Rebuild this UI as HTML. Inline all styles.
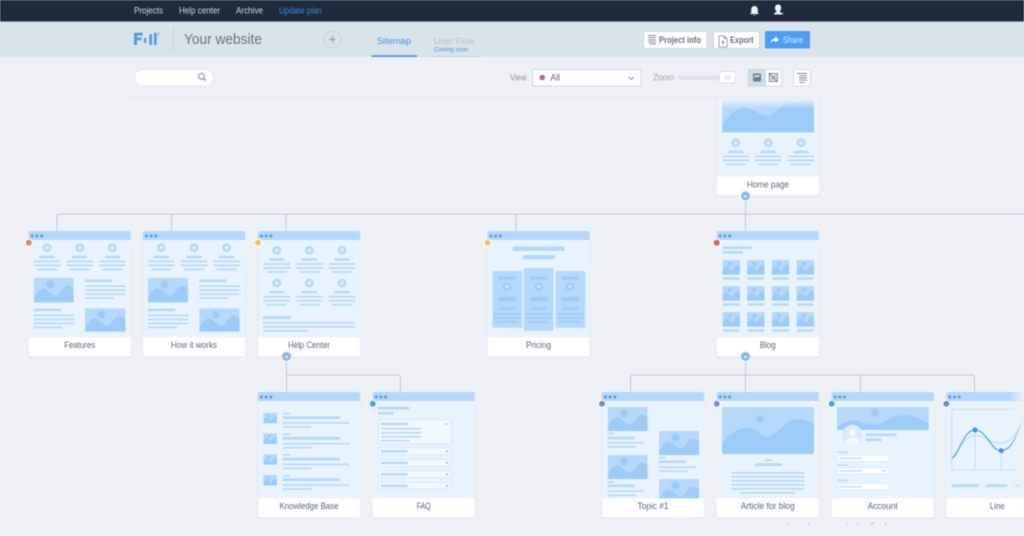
<!DOCTYPE html>
<html><head><meta charset="utf-8"><title>Sitemap</title>
<style>
html,body{margin:0;padding:0;width:1024px;height:536px;overflow:hidden;background:#edf1f5}
svg{display:block;filter:blur(.5px);font-family:"Liberation Sans",sans-serif}
</style></head><body>
<svg width="1024" height="536" viewBox="0 0 1024 536" xmlns="http://www.w3.org/2000/svg">
<defs>
<symbol id="img" viewBox="0 0 120 74" preserveAspectRatio="none">
<rect width="120" height="74" rx="2" fill="#b5d8fb"/><circle cx="49" cy="20" r="12" fill="#9ccbf9"/>
<path d="M0 64C8 45 20 32 28 32C42 32 50 54 66 54C82 54 85 24 102 24C110 24 116 28 120 36V72Q120 74 118 74H2Q0 74 0 72Z" fill="#9ccbf9"/>
</symbol>
<g id="card">
<rect x="-.5" y=".5" width="103" height="126" rx="2" fill="#dde4eb"/>
<rect width="102" height="125.5" rx="2" fill="#fff"/>
<path d="M0 8H102V106.3H0Z" fill="#e8f3fd"/>
<path d="M0 9V2Q0 0 2 0H100Q102 0 102 2V9Z" fill="#b5d7fb"/>
<circle cx="3.5" cy="5" r="1.5" fill="#4d9df3"/><circle cx="8.2" cy="5" r="1.5" fill="#4d9df3"/><circle cx="12.9" cy="5" r="1.5" fill="#4d9df3"/>
</g>
<g id="col" fill="#b5d7f9">
<circle r="4.4"/><circle r="2" fill="#dcebfb"/>
<rect x="-7.7" y="8" width="15.4" height="2.4"/>
<rect x="-13.2" y="12.9" width="26.4" height="1.6"/><rect x="-13.2" y="16.9" width="26.4" height="1.6"/><rect x="-10" y="20.9" width="20" height="1.6"/>
</g>
<g id="txtblock" fill="#b5d7f9">
<rect width="27.4" height="2.4"/><rect y="5.9" width="40.4" height="1.6"/><rect y="9.9" width="40.4" height="1.6"/><rect y="13.9" width="40.4" height="1.6"/><rect y="17.9" width="29" height="1.6"/>
</g>
<g id="feat">
<use href="#card"/>
<use href="#col" x="18.3" y="16.7"/><use href="#col" x="51" y="16.7"/><use href="#col" x="83.7" y="16.7"/>
<use href="#img" x="5" y="46.7" width="40" height="24.7"/>
<use href="#txtblock" x="56.3" y="48.5"/>
<use href="#txtblock" x="5" y="77.7"/>
<use href="#img" x="56.3" y="77.3" width="40.4" height="23.4"/>
</g>
<g id="pcol" fill="#9ccbf9">
<rect x="6" y="5.7" width="17.4" height="3"/>
<circle cx="14.5" cy="15.7" r="4.2"/><circle cx="14.5" cy="15.7" r="1.9" fill="#cfe4fb"/>
<rect x="6" y="26" width="17.4" height="4.3"/>
<rect x="7" y="36.3" width="15.4" height="2.4"/>
<rect x="1.3" y="42" width="26.7" height="1.6"/><rect x="1.3" y="46" width="26.7" height="1.6"/><rect x="4" y="50" width="20.7" height="1.6"/>
</g>
<g id="thumb">
<use href="#img" width="17.6" height="14.7"/>
<rect x=".6" y="17.3" width="16.4" height="2.4" fill="#b5d7f9"/>
</g>
<g id="kb" fill="#b5d7f9">
<use href="#img" x="5.3" width="13.7" height="10.6"/>
<rect x="24.7" y=".2" width="8" height="1.4"/><rect x="24.7" y="3.6" width="57" height="2.7"/>
<rect x="24.7" y="9.5" width="66.6" height="1.6"/><rect x="24.7" y="13.5" width="28.6" height="1.6"/>
</g>
<g id="faqrow">
<rect x="5.7" y=".5" width="73" height="7" rx="1" fill="#f2f8fe" stroke="#d3e5f6" stroke-width=".9"/>
<rect x="8.3" y="2.8" width="26.7" height="2.5" fill="#b5d7f9"/><circle cx="74.3" cy="4" r="1.1" fill="#8fbfec"/>
</g>
<clipPath id="hc"><rect x="700" y="98" width="140" height="110"/></clipPath>
<clipPath id="tc"><rect x="0" y="9" width="102" height="97.3"/></clipPath>
<linearGradient id="fade" x1="0" y1="0" x2="0" y2="1"><stop offset="0" stop-color="#eef3f8"/><stop offset="1" stop-color="#eef3f8" stop-opacity="0"/></linearGradient>
<linearGradient id="rf" x1="0" y1="0" x2="1" y2="0"><stop offset="0" stop-color="#edf1f5" stop-opacity="0"/><stop offset="1" stop-color="#edf1f5"/></linearGradient>
</defs>

<!-- top bar -->
<rect width="1024" height="536" fill="#edf1f5"/>
<rect width="1024" height="21.5" fill="#1e2b3c"/>
<g font-size="9" fill="#d3d9df">
<text x="134" y="13.7" textLength="29" lengthAdjust="spacingAndGlyphs">Projects</text><text x="179" y="13.7" textLength="41" lengthAdjust="spacingAndGlyphs">Help center</text><text x="236" y="13.7" textLength="27" lengthAdjust="spacingAndGlyphs">Archive</text>
<text x="279" y="13.7" textLength="43" lengthAdjust="spacingAndGlyphs" fill="#3f84d6">Update plan</text>
</g>
<path d="M754.5 6C752.3 6 751.2 7.6 751.2 9.8V12.4L750 14H759L757.8 12.4V9.8C757.8 7.6 756.7 6 754.5 6ZM753.2 14.8H755.8Q754.5 16.4 753.2 14.8Z" fill="#eef1f4"/>
<path d="M778 4.5C775.8 4.5 775 6 775 8C775 9.6 775.7 10.6 776.5 11.2V12C775 12.4 774 13 774 14.5H782.5C782.5 13 781.2 12.4 779.8 12V11.2C780.5 10.8 781 10 781 9V7C781 5.5 780 4.5 778 4.5Z" fill="#eef1f4"/><rect x="782" y="13" width="2" height="1" fill="#7c8794"/>

<!-- header -->
<rect y="21.5" width="1024" height="35.5" fill="#d9e3ea"/>
<rect y="21.5" width="1024" height="1" fill="#cfd9e1"/>
<g fill="#4c9df0">
<path d="M134 32.8H142.7V35.6H137V37.6H141.6V40.2H137V45H134Z"/>
<rect x="144" y="38" width="2.2" height="5"/>
<rect x="149.3" y="34.3" width="2.7" height="10.7"/><rect x="154" y="32.8" width="2.7" height="12.2"/>
</g>
<text x="157.5" y="35.5" font-size="5" fill="#9aa8b4">β</text>
<rect x="173" y="28" width="1" height="23" fill="#c6d1da"/>
<text x="184" y="44" font-size="15" fill="#68747f" textLength="78" lengthAdjust="spacingAndGlyphs">Your website</text>
<circle cx="332.5" cy="39.5" r="8.5" fill="none" stroke="#b3bec8" stroke-width=".8" stroke-dasharray="1.6 1.4"/>
<path d="M329 39.5H336M332.5 36V43" stroke="#87939e" stroke-width=".9"/>
<text x="377" y="44" font-size="9.6" fill="#4a90e2" textLength="34" lengthAdjust="spacingAndGlyphs">Sitemap</text>
<rect x="371.5" y="55.3" width="45.5" height="1.7" fill="#4a90e2"/>
<text x="434" y="44" font-size="9.6" fill="#b6c1cb" textLength="40.5" lengthAdjust="spacingAndGlyphs">User Flow</text>
<text x="434" y="51.3" font-size="6" fill="#4f95e4" textLength="34" lengthAdjust="spacingAndGlyphs">Coming soon</text>
<rect x="428.5" y="56" width="51.5" height="1" fill="#c9d3db"/>

<g fill="#fff" stroke="#c2d0dc" stroke-width=".8">
<rect x="643.5" y="31.5" width="63.5" height="17" rx="1.5"/><rect x="713.5" y="31.5" width="46" height="17" rx="1.5"/>
</g>
<rect x="765" y="31" width="45" height="17.5" rx="1.5" fill="#4c9df5"/>
<path d="M648 36H656M648 38.2H656M648 40.4H656M648 42.6H656M649.5 44.4H656" stroke="#7b858f" stroke-width=".9" transform="translate(0,-.5)"/>
<text x="659" y="42.8" font-size="9" font-weight="bold" fill="#66707a" textLength="42" lengthAdjust="spacingAndGlyphs">Project info</text>
<path d="M719 36H724L727 38.5V47H719Z M724 36V38.5H727M723 45V41M721.5 42.5L723 41L724.5 42.5" fill="none" stroke="#7b858f" stroke-width=".8"/>
<text x="730" y="42.8" font-size="9" font-weight="bold" fill="#66707a" textLength="23.5" lengthAdjust="spacingAndGlyphs">Export</text>
<path d="M770 43C770.5 40.5 772.5 39 775 38.8V36.5L779 39.7L775 42.5V40.6C773 40.6 771.5 41.5 770 43Z" fill="#fff"/>
<text x="783" y="42.8" font-size="9" fill="#dcedff" textLength="20" lengthAdjust="spacingAndGlyphs">Share</text>

<!-- toolbar -->
<rect x="134.5" y="69.5" width="79" height="16.5" rx="8.2" fill="#fff" stroke="#dde5ec" stroke-width=".9"/>
<circle cx="201.5" cy="76.3" r="2.9" fill="none" stroke="#7f8993" stroke-width="1"/><path d="M203.7 78.5L205.8 80.6" stroke="#7f8993" stroke-width="1.2"/>
<rect x="126" y="97" width="676" height=".9" fill="#e2e8ee"/>
<text x="510" y="80.5" font-size="9" fill="#8d97a1" textLength="16.5" lengthAdjust="spacingAndGlyphs">View</text>
<rect x="532.5" y="69.5" width="108.5" height="16.5" rx="1.5" fill="#fff" stroke="#c6d7e6" stroke-width=".9"/>
<circle cx="542.3" cy="77.5" r="2.8" fill="#c2667c"/>
<text x="550.5" y="80.5" font-size="8.8" fill="#5a646e" textLength="9.5" lengthAdjust="spacingAndGlyphs">All</text>
<path d="M628.5 77L631.3 79.4L634 77" fill="none" stroke="#7a848e" stroke-width=".9"/>
<text x="653" y="80.5" font-size="9" fill="#99a3ad" textLength="21" lengthAdjust="spacingAndGlyphs">Zoom</text>
<rect x="679" y="75.5" width="42" height="4.5" fill="#dbe4ec"/>
<rect x="719.5" y="71.5" width="16" height="11.5" rx="1.5" fill="#fff" stroke="#d5dfe8" stroke-width=".9"/>
<path d="M725.5 75V80M727.5 75V80M729.5 75V80" stroke="#c4ced7" stroke-width=".7"/>
<rect x="748.5" y="69.5" width="17" height="16.5" fill="#cfdeeb" stroke="#bed0df" stroke-width=".8"/>
<rect x="765.5" y="69.5" width="16" height="16.5" fill="#fff" stroke="#c6d7e6" stroke-width=".8"/>
<rect x="753" y="73.5" width="8" height="8" rx=".8" fill="#6d7985"/><path d="M754.3 78.5L756.5 76.5L758 77.7L760 75.5V75H754.3Z" fill="#cfdeeb"/>
<rect x="769.3" y="73.5" width="8" height="8" fill="#dfe5ea" stroke="#75808b" stroke-width=".9"/><path d="M769.3 73.5L777.3 81.5M772 79.5L775.5 75.5" stroke="#75808b" stroke-width=".9"/>
<rect x="793.5" y="69.5" width="17" height="16.5" rx="1" fill="#fff" stroke="#c6d7e6" stroke-width=".8"/>
<path d="M797 73.5H807M799 75.8H807M799 78H807M799 80.2H807M799 82.4H805" stroke="#7b858f" stroke-width=".9"/>

<!-- connectors -->
<g fill="none" stroke="#b7cce0" stroke-width="1">
<path d="M57 214H1024M57 214V231M171.5 214V231M286 214V231M516 214V231M745.5 196V231"/>
<path d="M286.5 357V392M286.5 375H398Q400.5 375 400.5 377.5V392"/>
<path d="M630.5 392V377.5Q630.5 375 633 375H972Q974.5 375 974.5 377.5V392M745.5 357V392M860.5 375V392"/>
</g>

<!-- Home page -->
<g clip-path="url(#hc)">
<g transform="translate(717,70)">
<use href="#card"/>
<rect x="5.3" y="15" width="91.7" height="47.3" fill="#b5d8fb"/>
<path d="M5.3 55C12 45 20 37.7 27 37.7C36 37.7 42 45.7 51 45.7C58 45.7 62 34 72 33L97 32V62.3H5.3Z" fill="#9ccbf9"/>
<use href="#col" x="18.7" y="72.7"/><use href="#col" x="51.3" y="72.7"/><use href="#col" x="84" y="72.7"/>
</g></g>
<rect x="717" y="98" width="102" height="11" fill="url(#fade)"/>
<g font-size="9" fill="#5b6570" text-anchor="middle">
<text x="768" y="187.5" textLength="42" lengthAdjust="spacingAndGlyphs">Home page</text>
</g>

<!-- Row 2 -->
<g transform="translate(28.7,231)"><use href="#feat"/><text x="51" y="117" font-size="9" fill="#5b6570" text-anchor="middle" textLength="31" lengthAdjust="spacingAndGlyphs">Features</text><circle cy="11.8" r="3.5" fill="#f5813f" stroke="#fff" stroke-width="1"/></g>
<g transform="translate(143,231)"><use href="#feat"/><text x="51" y="117" font-size="9" fill="#5b6570" text-anchor="middle" textLength="46" lengthAdjust="spacingAndGlyphs">How it works</text></g>

<g transform="translate(258,231)"><use href="#card"/>
<use href="#col" x="18.7" y="19.3"/><use href="#col" x="51.3" y="19.3"/><use href="#col" x="84" y="19.3"/>
<use href="#col" x="18.7" y="52"/><use href="#col" x="51.3" y="52"/><use href="#col" x="84" y="52"/>
<g fill="#b5d7f9"><rect x="5" y="85" width="28" height="2.8"/><rect x="5" y="91" width="92" height="1.6"/><rect x="5" y="95" width="92" height="1.6"/><rect x="5" y="99" width="45.5" height="1.6"/></g>
<text x="51" y="117" font-size="9" fill="#5b6570" text-anchor="middle" textLength="42" lengthAdjust="spacingAndGlyphs">Help Center</text><circle cy="11.8" r="3.5" fill="#f8c24e" stroke="#fff" stroke-width="1"/></g>

<g transform="translate(487.5,231)"><use href="#card"/>
<g fill="#b5d7f9"><rect x="25.3" y="15.3" width="51.7" height="4.7"/><rect x="35.7" y="24" width="31.6" height="4.3"/></g>
<rect x="5" y="40" width="29.7" height="56.7" rx="1.5" fill="#b5d8fb"/><rect x="36.3" y="37" width="29.7" height="62.7" rx="1.5" fill="#b5d8fb"/><rect x="68" y="40" width="29.7" height="56.7" rx="1.5" fill="#b5d8fb"/>
<use href="#pcol" x="5" y="40"/><use href="#pcol" x="36.6" y="40"/><use href="#pcol" x="68" y="40"/>
<text x="51" y="117" font-size="9" fill="#5b6570" text-anchor="middle" textLength="25" lengthAdjust="spacingAndGlyphs">Pricing</text><circle cy="11.8" r="3.5" fill="#f8c24e" stroke="#fff" stroke-width="1"/></g>

<g transform="translate(716.7,231)"><use href="#card"/>
<g fill="#b5d7f9"><rect x="6" y="15.3" width="28.7" height="2.7"/><rect x="6" y="20" width="20.3" height="2.7"/></g>
<use href="#thumb" x="5.7" y="29"/><use href="#thumb" x="30.3" y="29"/><use href="#thumb" x="55" y="29"/><use href="#thumb" x="79.7" y="29"/>
<use href="#thumb" x="5.7" y="55"/><use href="#thumb" x="30.3" y="55"/><use href="#thumb" x="55" y="55"/><use href="#thumb" x="79.7" y="55"/>
<use href="#thumb" x="5.7" y="81"/><use href="#thumb" x="30.3" y="81"/><use href="#thumb" x="55" y="81"/><use href="#thumb" x="79.7" y="81"/>
<text x="51" y="117" font-size="9" fill="#5b6570" text-anchor="middle" textLength="16" lengthAdjust="spacingAndGlyphs">Blog</text><circle cy="11.8" r="3.5" fill="#f2574f" stroke="#fff" stroke-width="1"/></g>

<!-- Row 3 -->
<g transform="translate(258,392)"><use href="#card"/>
<use href="#kb" y="20.7"/><use href="#kb" y="41.4"/><use href="#kb" y="62.1"/><use href="#kb" y="82.8"/>
<text x="51" y="117" font-size="9" fill="#5b6570" text-anchor="middle" textLength="59" lengthAdjust="spacingAndGlyphs">Knowledge Base</text></g>

<g transform="translate(372.7,392)"><use href="#card"/>
<g fill="#b5d7f9"><rect x="5.3" y="14.8" width="31" height="2.7"/><rect x="5.3" y="20" width="15.4" height="2.5"/></g>
<rect x="5.7" y="27.7" width="73" height="24.3" rx="1" fill="#f2f8fe" stroke="#d3e5f6" stroke-width=".9"/>
<g fill="#b5d7f9"><rect x="8.3" y="30.7" width="26.7" height="2.5"/><rect x="8.3" y="36" width="40" height="1.6"/><rect x="8.3" y="40" width="40" height="1.6"/><rect x="8.3" y="44" width="40" height="1.6"/><rect x="8.3" y="48" width="29" height="1.6"/><rect x="72.5" y="31.5" width="3" height=".9" fill="#8fbfec"/></g>
<use href="#faqrow" y="55.3"/><use href="#faqrow" y="66.9"/><use href="#faqrow" y="78.3"/><use href="#faqrow" y="89.8"/>
<text x="51" y="117" font-size="9" fill="#5b6570" text-anchor="middle" textLength="14" lengthAdjust="spacingAndGlyphs">FAQ</text><circle cy="11.8" r="3.5" fill="#4a9cf5" stroke="#fff" stroke-width="1"/></g>

<g transform="translate(602,392)"><use href="#card"/>
<g clip-path="url(#tc)">
<use href="#img" x="5.7" y="15" width="40" height="24"/><use href="#img" x="5.7" y="63" width="40" height="24"/>
<use href="#img" x="57" y="39" width="40" height="24"/><use href="#img" x="57" y="87" width="40" height="24"/>
<g fill="#b5d7f9">
<rect x="5.7" y="40.6" width="6.7" height="1.5"/><rect x="5.7" y="44.8" width="26.7" height="2.6"/><rect x="5.7" y="50" width="36.3" height="1.6"/><rect x="5.7" y="54" width="28.3" height="1.6"/>
<rect x="5.7" y="89.3" width="6.7" height="1.5"/><rect x="5.7" y="92.6" width="26.7" height="2.6"/><rect x="5.7" y="98.4" width="36.3" height="1.6"/><rect x="5.7" y="102.4" width="28.3" height="1.6"/>
<rect x="57" y="65" width="7" height="1.5"/><rect x="57" y="68.4" width="27" height="2.6"/><rect x="57" y="74.4" width="36.7" height="1.6"/><rect x="57" y="78.4" width="28.7" height="1.6"/>
</g></g>
<text x="51" y="117" font-size="9" fill="#5b6570" text-anchor="middle" textLength="31" lengthAdjust="spacingAndGlyphs">Topic #1</text><circle cy="11.8" r="3.5" fill="#7f86dc" stroke="#fff" stroke-width="1"/></g>

<g transform="translate(716.7,392)"><use href="#card"/>
<rect x="5.3" y="15" width="92" height="47" rx="1.5" fill="#b5d8fb"/><circle cx="43.3" cy="27" r="4" fill="#9ccbf9"/>
<path d="M5.3 53C12 40 22 36.5 30 36C40 35.5 45 45 50 45C60 45 68 27 82 27C90 27 94 30 97.3 33V60.5Q97.3 62 96 62H7Q5.3 62 5.3 60.5Z" fill="#9ccbf9"/>
<g fill="#b5d7f9"><rect x="48.3" y="67.6" width="7.4" height="1.5"/><rect x="38.3" y="71.3" width="27" height="2.7"/>
<rect x="14.7" y="80" width="73" height="1.6"/><rect x="14.7" y="84" width="73" height="1.6"/><rect x="14.7" y="88" width="73" height="1.6"/><rect x="14.7" y="92" width="73" height="1.6"/><rect x="14.7" y="96" width="73" height="1.6"/><rect x="22.7" y="100" width="55.3" height="1.6"/></g>
<text x="51" y="117" font-size="9" fill="#5b6570" text-anchor="middle" textLength="54" lengthAdjust="spacingAndGlyphs">Article for blog</text><circle cy="11.8" r="3.5" fill="#7f86dc" stroke="#fff" stroke-width="1"/></g>

<g transform="translate(831.7,392)"><use href="#card"/>
<rect x="5.3" y="15" width="91.7" height="23" rx="1.5" fill="#b5d8fb"/><circle cx="43" cy="20.7" r="4" fill="#9ccbf9"/>
<path d="M5.3 35C15 28 22 27 30 30C38 33 45 34 52 30C62 24 72 22 80 24C88 26 93 30 97 31V36.5Q97 38 95.5 38H7Q5.3 38 5.3 36.5Z" fill="#9ccbf9"/>
<circle cx="20.7" cy="43.3" r="10.5" fill="#dbeafa"/><circle cx="20.7" cy="40.5" r="3.6" fill="#f3f8fe"/><path d="M13.5 50.5C14.5 46.5 17.5 45.5 20.7 45.5C24 45.5 27 46.5 28 50.5C24 54.5 17.5 54.5 13.5 50.5Z" fill="#f3f8fe"/>
<g fill="#b5d7f9"><rect x="34" y="41.5" width="31" height="2.6"/><rect x="34" y="46.5" width="15.7" height="2.6"/>
<rect x="5.3" y="59.6" width="11.7" height="1.3"/><rect x="5.3" y="72.6" width="11.7" height="1.3"/><rect x="5.3" y="87.8" width="11.7" height="1.3"/></g>
<g fill="#fff" stroke="#d3e5f6" stroke-width=".7"><rect x="5.3" y="63.3" width="52" height="6.2" rx=".8"/><rect x="5.3" y="76" width="52" height="6" rx=".8"/><rect x="5.3" y="91.7" width="52" height="6" rx=".8"/></g>
<g fill="#b5d7f9"><rect x="7.3" y="65.7" width="23.4" height="1.3"/><rect x="7.3" y="78.3" width="23.4" height="1.3"/><rect x="7.3" y="94.1" width="23.4" height="1.3"/></g>
<path d="M50.5 78.2H53.5L52 80Z" fill="#8fbfec"/>
<text x="51" y="117" font-size="9" fill="#5b6570" text-anchor="middle" textLength="30" lengthAdjust="spacingAndGlyphs">Account</text><circle cy="11.8" r="3.5" fill="#4a9cf5" stroke="#fff" stroke-width="1"/></g>

<g transform="translate(946.3,392)"><use href="#card"/>
<path d="M78 17.5H5.5V78H78" fill="none" stroke="#cbdff3" stroke-width="1"/>
<path d="M28.7 38V78M55 58.7V78" stroke="#c5dbf0" stroke-width="1"/>
<path d="M5.7 66.3C13 60 17 43.7 28.7 43.7C40 43.7 43 51.3 55 51.3C66 51.3 71 38 78 27" fill="none" stroke="#c3dcf6" stroke-width="1.3"/>
<path d="M5.7 66.3C13 62 17 38 28.7 38C41 38 44 58.7 55 58.7C67 58.7 71 38 78 26.3" fill="none" stroke="#5c9fe6" stroke-width="1.2"/>
<circle cx="28.7" cy="38" r="2.5" fill="#4a90e2"/><circle cx="55" cy="58.7" r="2.5" fill="#4a90e2"/>
<g fill="#b5d7f9"><rect x="5.3" y="92.3" width="27" height="2.7"/><rect x="39.7" y="92.3" width="21.3" height="2.7"/><rect x="68.7" y="92.3" width="10" height="2.7"/></g>
<text x="51" y="117" font-size="9" fill="#5b6570" text-anchor="middle" textLength="15" lengthAdjust="spacingAndGlyphs">Line</text><circle cy="11.8" r="3.5" fill="#7f86dc" stroke="#fff" stroke-width="1"/></g>
<rect x="1010" y="392" width="14" height="106" fill="url(#rf)"/>

<!-- expanders -->
<g stroke="#f1f5f9" stroke-width="1.2" fill="#8fb5e0">
<circle cx="745.5" cy="196" r="5"/><circle cx="286.5" cy="356.5" r="5"/><circle cx="745.5" cy="356.5" r="5"/>
</g>
<g fill="#f4f8fc"><path d="M743.5 197.2L745.5 194.8L747.5 197.2Z"/><path d="M284.5 357.7L286.5 355.3L288.5 357.7Z"/><path d="M743.5 357.7L745.5 355.3L747.5 357.7Z"/></g>
<g fill="#aab5c0"><rect x="787" y="523.5" width="1.5" height=".8"/><rect x="808" y="523.5" width="1.5" height=".8"/><rect x="847" y="523.5" width="1.5" height=".8"/><rect x="857" y="523.5" width="1.5" height=".8"/><rect x="871" y="523" width="3" height="1"/><rect x="885" y="523" width="1.5" height="1.2"/></g>
</svg>
</body></html>
